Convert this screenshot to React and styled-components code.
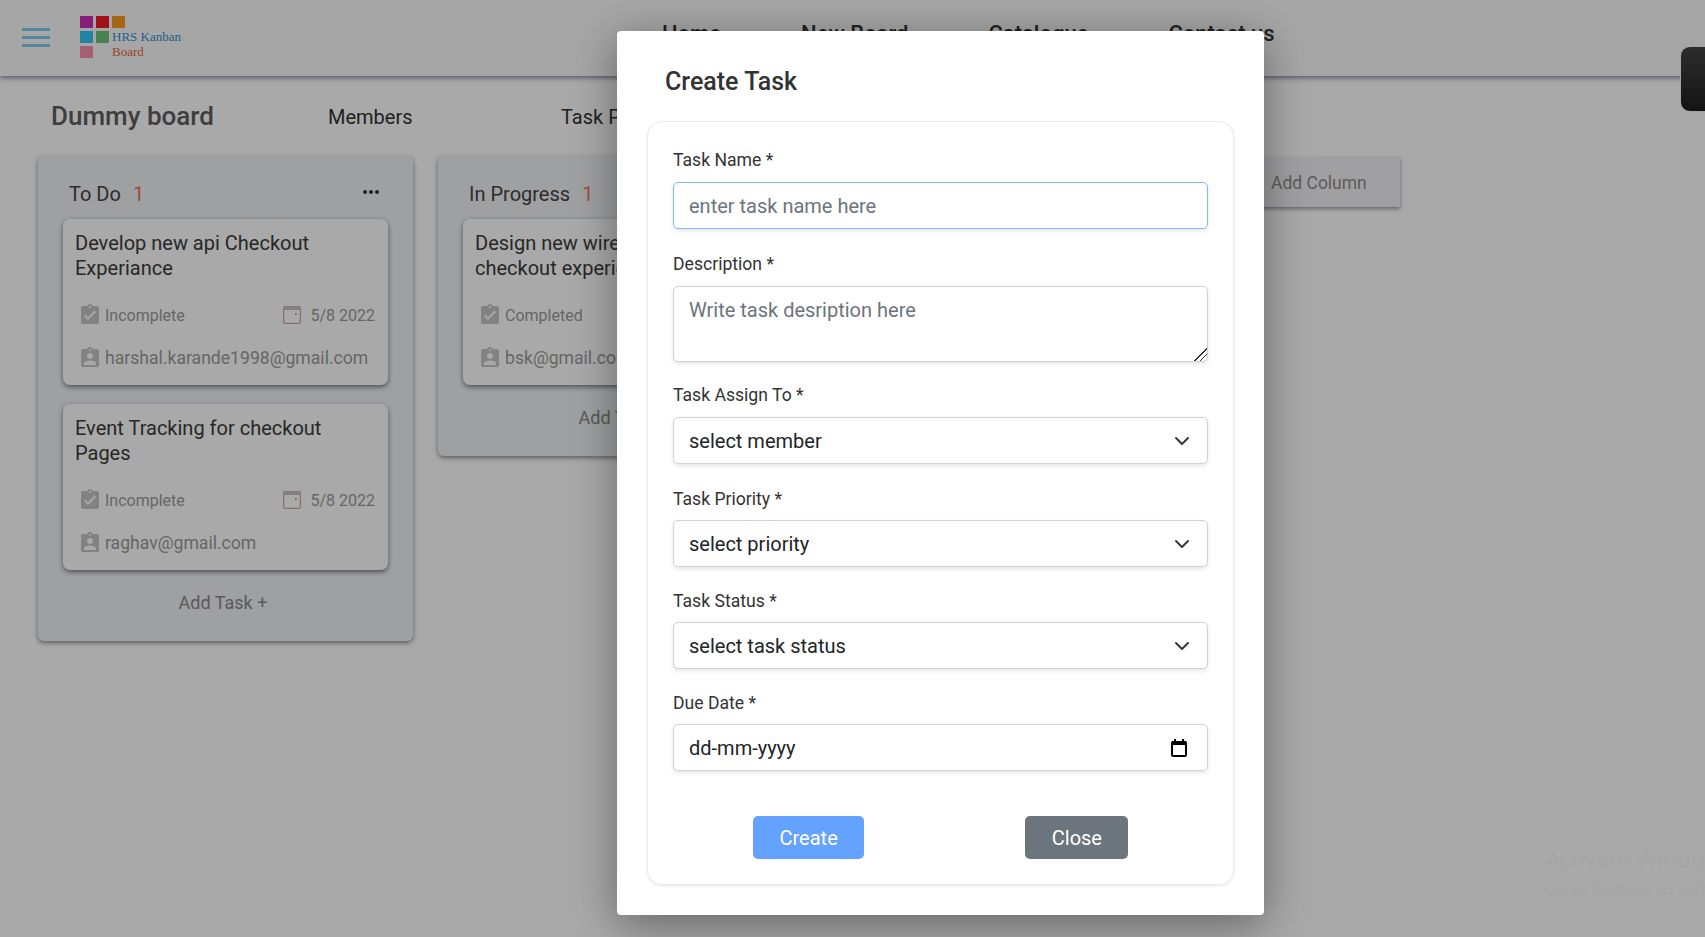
import React from 'react';
import styled, { createGlobalStyle } from 'styled-components';
import { MdAssignmentTurnedIn, MdAssignmentInd } from 'react-icons/md';

const GlobalStyle = createGlobalStyle`
  html, body {
    margin: 0;
    padding: 0;
    background: #fff;
    font-family: Roboto, "Liberation Sans", sans-serif;
    overflow: hidden;
  }
  * { box-sizing: border-box; }
`;

const Page = styled.div`
  position: relative;
  width: 1705px;
  height: 937px;
  overflow: hidden;
  background: #ffffff;
`;

const Navbar = styled.header`
  display: flex;
  align-items: center;
  height: 76px;
  padding: 0 0 2px 22px;
  background: #fbfbfb;
  box-shadow: 0 2px 5px rgba(40, 30, 70, 0.55);
`;

const Burger = styled.div`
  display: flex;
  flex-direction: column;
  gap: 5px;
  width: 28px;
  margin-right: 30px;
  span {
    display: block;
    height: 3px;
    background: #7fcbee;
  }
`;

const Logo = styled.div`
  display: grid;
  grid-template-columns: repeat(3, 13px);
  grid-auto-rows: 12px;
  gap: 3px;
  position: relative;
  width: 105px;
  height: 42px;
`;

const LogoSquare = styled.i`
  display: block;
  background: ${props => props.color};
`;

const LogoTitle = styled.span`
  position: absolute;
  left: 32px;
  top: ${props => props.top}px;
  font-family: "Liberation Serif", serif;
  font-size: 13px;
  white-space: nowrap;
  color: ${props => props.color};
`;

const NavLinks = styled.nav`
  display: flex;
  margin: 0 0 8px 477px;
  gap: 80px;
`;

const NavLink = styled.a`
  font-size: 22px;
  font-weight: 500;
  color: #333;
`;

const SideWidget = styled.div`
  position: absolute;
  top: 46px;
  right: -12px;
  width: 37px;
  height: 66px;
  border-radius: 10px;
  border: 1px solid #f5f5f5;
  background: linear-gradient(#444444, #1f1f1f);
`;

const Main = styled.main`
  padding: 0 38px;
`;

const BoardBar = styled.div`
  display: flex;
  align-items: center;
  height: 80px;
  padding-left: 13px;
`;

const BoardTitle = styled.h1`
  width: 277px;
  margin: 0;
  font-size: 26px;
  font-weight: 500;
  color: #5e5e5e;
`;

const BoardTab = styled.span`
  width: 233px;
  margin-top: 1px;
  font-size: 20px;
  color: #333;
`;

const Columns = styled.div`
  display: flex;
  align-items: flex-start;
  gap: 25px;
`;

const Column = styled.section`
  width: 375px;
  flex: none;
  padding: 22px 25px 26px;
  border-radius: 6px;
  background: #eff1f5;
  box-shadow: 0 2px 5px rgba(0, 0, 0, 0.45);
`;

const ColumnHead = styled.div`
  display: flex;
  align-items: center;
  justify-content: space-between;
  height: 32px;
  padding: 0 9px 0 6px;
  margin-bottom: 9px;
`;

const ColumnName = styled.div`
  font-size: 20px;
  color: #444;
`;

const Count = styled.span`
  margin-left: 12px;
  color: #ee7a55;
`;

const Dots = styled.div`
  display: flex;
  gap: 2px;
  margin-bottom: 5px;
  span {
    width: 4px;
    height: 4px;
    border-radius: 50%;
    background: #333;
  }
`;

const Card = styled.article`
  height: 166px;
  padding: 12px;
  margin-bottom: 19px;
  border-radius: 7px;
  background: #fff;
  box-shadow: 0 2px 5px rgba(0, 0, 0, 0.5);
`;

const CardTitle = styled.div`
  height: 62px;
  font-size: 20px;
  line-height: 25px;
  color: #3c3c3c;
`;

const MetaRow = styled.div`
  display: flex;
  align-items: center;
  justify-content: space-between;
  height: 28px;
  margin-top: ${props => (props.$low ? 15 : 8)}px;
  padding: 0 1px 0 6px;
`;

const MetaItem = styled.div`
  display: flex;
  align-items: center;
  gap: 6px;
  font-size: ${props => props.$size || 16}px;
  color: #9a9a9a;
`;

const DateText = styled.span`
  margin-left: 3px;
`;

const CheckIcon = styled(MdAssignmentTurnedIn)`
  width: 24px;
  height: 24px;
  margin: -3px;
  color: #c4c4c4;
`;

const PersonIcon = styled(MdAssignmentInd)`
  width: 24px;
  height: 24px;
  margin: -3px;
  color: #c4c4c4;
`;

const AddTask = styled.div`
  height: 26px;
  padding-right: 5px;
  line-height: 28px;
  text-align: center;
  font-size: 18px;
  color: #888;
`;

const AddColumn = styled.div`
  display: flex;
  align-items: center;
  flex: none;
  width: 160px;
  height: 50px;
  margin: 1px 0 0 2px;
  padding: 2px 0 0 31px;
  background: #f2f2f5;
  font-size: 17.5px;
  color: #8c8c8c;
  box-shadow: 0 2px 4px rgba(0, 0, 0, 0.4);
`;

const Watermark = styled.div`
  position: absolute;
  left: 1545px;
  top: 841px;
  white-space: nowrap;
  font-family: "Open Sans", sans-serif;
  font-size: 23px;
  line-height: 36px;
  color: #f9f9f9;
  small {
    display: block;
    font-size: 16.5px;
    line-height: 24px;
  }
`;

const Backdrop = styled.div`
  position: absolute;
  inset: 0;
  background: rgba(0, 0, 0, 0.337);
`;

const Modal = styled.div`
  position: absolute;
  left: 617px;
  top: 31px;
  width: 647px;
  height: 884px;
  padding: 0 30px;
  background: #fff;
  border-radius: 4px;
  box-shadow: 0 10px 45px rgba(0, 0, 0, 0.4);
`;

const ModalTitle = styled.h2`
  margin: 0;
  height: 90px;
  padding: 37px 0 0 18px;
  font-size: 25px;
  line-height: 28px;
  font-weight: 500;
  color: #333;
`;

const FormCard = styled.form`
  height: 764px;
  padding: 25px 25px 0;
  border: 1px solid #e6ecef;
  border-radius: 15px;
  box-shadow: 0 1px 3px rgba(0, 0, 0, 0.1);
`;

const Field = styled.div`
  margin-bottom: ${props => props.$gap ?? 21}px;
`;

const Label = styled.label`
  display: block;
  height: 24px;
  margin-bottom: ${props => props.$gap ?? 10}px;
  font-size: 17.6px;
  line-height: 26px;
  color: #333;
`;

const fieldStyles = `
  display: block;
  width: 100%;
  border-radius: 5px;
  border: 1px solid #ccd3dc;
  background: #fff;
  box-shadow: 0 2px 4px rgba(0, 0, 0, 0.1);
  font-family: Roboto, sans-serif;
  font-size: 20px;
  color: #212529;
  outline: none;
`;

const TextInput = styled.input`
  ${fieldStyles}
  height: 47px;
  padding: 0 15px;
  border-color: ${props => (props.$focused ? '#86b7fe' : '#ccd3dc')};
  &::placeholder { color: #6c757d; }
`;

const TextArea = styled.textarea`
  ${fieldStyles}
  height: 76px;
  padding: 11px 15px;
  resize: vertical;
  &::placeholder { color: #6c757d; }
  &::-webkit-resizer {
    background: linear-gradient(
      135deg,
      transparent 0 56%,
      #333 56% 61%,
      transparent 61% 74%,
      #333 74% 79%,
      transparent 79%
    );
  }
`;

const Select = styled.div`
  ${fieldStyles}
  display: flex;
  align-items: center;
  justify-content: space-between;
  height: 47px;
  padding: 0 15px;
`;

const ChevronSvg = styled.svg`
  margin-right: 2px;
`;

const CalendarSvg = styled.svg`
  margin-right: 4px;
`;

const Actions = styled.div`
  display: flex;
  padding-left: 80px;
  gap: 161px;
`;

const Button = styled.button`
  height: 43px;
  padding: 0 26.5px;
  border: none;
  border-radius: 5px;
  font-family: Roboto, sans-serif;
  font-size: 20px;
  color: #fff;
  background: ${props => (props.$primary ? '#64a2ff' : '#6c757d')};
`;

const DateIcon = () => (
  <svg width="18" height="18" viewBox="0 0 18 18" fill="none">
    <rect x="0.6" y="0.6" width="16.8" height="16.8" rx="1.5" stroke="#c9a5a5" strokeWidth="1.2" />
    <rect x="0.6" y="0.6" width="16.8" height="3.4" fill="#c4c4c4" />
    <rect x="12" y="7" width="1.8" height="1.8" fill="#999" />
  </svg>
);

const Chevron = () => (
  <ChevronSvg width="16" height="16" viewBox="0 0 16 16" fill="none">
    <path d="M2 5l6 6 6-6" stroke="#343a40" strokeWidth="2" strokeLinecap="round" strokeLinejoin="round" />
  </ChevronSvg>
);

const CalendarGlyph = () => (
  <CalendarSvg width="18" height="20" viewBox="0 0 18 20" fill="none">
    <rect x="2" y="4" width="14" height="14" rx="1" stroke="#000" strokeWidth="2" />
    <rect x="2" y="3" width="14" height="4" fill="#000" />
    <rect x="4" y="1" width="2" height="3" fill="#000" />
    <rect x="12" y="1" width="2" height="3" fill="#000" />
  </CalendarSvg>
);

const TaskCard = ({ title, status, email }) => (
  <Card>
    <CardTitle>{title}</CardTitle>
    <MetaRow>
      <MetaItem>
        <CheckIcon />
        {status}
      </MetaItem>
      <MetaItem>
        <DateIcon />
        <DateText>5/8 2022</DateText>
      </MetaItem>
    </MetaRow>
    <MetaRow $low>
      <MetaItem $size={17.6}>
        <PersonIcon />
        {email}
      </MetaItem>
    </MetaRow>
  </Card>
);

const logoColors = ['#cc2eb4', '#f01c22', '#fb9a1d', '#30c6f7', '#6dc57a', null, '#f98fb0'];

export default function App() {
  return (
    <Page>
      <GlobalStyle />
      <Navbar>
        <Burger>
          <span />
          <span />
          <span />
        </Burger>
        <Logo>
          {logoColors.map((c, i) => (c ? <LogoSquare key={i} color={c} /> : <i key={i} />))}
          <LogoTitle top={13} color="#2f8fd0">HRS Kanban</LogoTitle>
          <LogoTitle top={28} color="#f0603c">Board</LogoTitle>
        </Logo>
        <NavLinks>
          <NavLink>Home</NavLink>
          <NavLink>New Board</NavLink>
          <NavLink>Catalogue</NavLink>
          <NavLink>Contact us</NavLink>
        </NavLinks>
      </Navbar>
      <SideWidget />
      <Main>
        <BoardBar>
          <BoardTitle>Dummy board</BoardTitle>
          <BoardTab>Members</BoardTab>
          <BoardTab>Task Progress</BoardTab>
        </BoardBar>
        <Columns>
          <Column>
            <ColumnHead>
              <ColumnName>To Do<Count>1</Count></ColumnName>
              <Dots><span /><span /><span /></Dots>
            </ColumnHead>
            <TaskCard title="Develop new api Checkout Experiance" status="Incomplete" email="harshal.karande1998@gmail.com" />
            <TaskCard title="Event Tracking for checkout Pages" status="Incomplete" email="raghav@gmail.com" />
            <AddTask>Add Task +</AddTask>
          </Column>
          <Column>
            <ColumnHead>
              <ColumnName>In Progress<Count>1</Count></ColumnName>
              <Dots><span /><span /><span /></Dots>
            </ColumnHead>
            <TaskCard title="Design new wireframe for checkout experience" status="Completed" email="bsk@gmail.com" />
            <AddTask>Add Task +</AddTask>
          </Column>
          <Column />
          <AddColumn>Add Column</AddColumn>
        </Columns>
      </Main>
      <Watermark>
        Activate Windows
        <small>Go to Settings to activate Windows.</small>
      </Watermark>
      <Backdrop />
      <Modal>
        <ModalTitle>Create Task</ModalTitle>
        <FormCard>
          <Field $gap={22}>
            <Label $gap={11}>Task Name *</Label>
            <TextInput $focused placeholder="enter task name here" />
          </Field>
          <Field $gap={20}>
            <Label $gap={11}>Description *</Label>
            <TextArea placeholder="Write task desription here" />
          </Field>
          <Field $gap={22}>
            <Label $gap={11}>Task Assign To *</Label>
            <Select>select member<Chevron /></Select>
          </Field>
          <Field>
            <Label>Task Priority *</Label>
            <Select>select priority<Chevron /></Select>
          </Field>
          <Field>
            <Label>Task Status *</Label>
            <Select>select task status<Chevron /></Select>
          </Field>
          <Field $gap={45}>
            <Label>Due Date *</Label>
            <Select>dd-mm-yyyy<CalendarGlyph /></Select>
          </Field>
          <Actions>
            <Button $primary type="button">Create</Button>
            <Button type="button">Close</Button>
          </Actions>
        </FormCard>
      </Modal>
    </Page>
  );
}
